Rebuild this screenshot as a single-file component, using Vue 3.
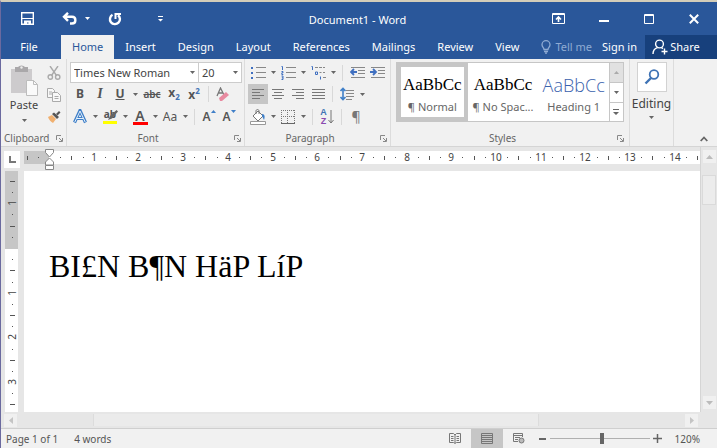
<template>
  <div class="word">
    <header class="title-bar">
      <div class="quick">
        <button class="q-btn save" aria-label="Save">
          <svg width="13" height="13" viewBox="0 0 13 13" fill="none" stroke="currentColor">
            <path d="M.7.7h11.600v11.600H.7z" stroke-width="1.400"/>
            <path d="M1 6.500h11"/>
            <path d="M3 8.500h7v4H7.500v-2H6v2H3z" fill="currentColor" stroke="none"/>
          </svg>
        </button>
        <button class="q-btn undo" aria-label="Undo">
          <svg width="15" height="13" viewBox="0 0 15 13" fill="none" stroke="currentColor" stroke-width="2.400">
            <path d="M6 .8L2 4.800l4 4M2.500 4.800H10c4.500 0 4.500 6.700 0 6.700H8"/>
          </svg>
        </button>
        <svg class="undo-caret" width="5" height="3" viewBox="0 0 5 3"><path d="M0 0h5L2.500 3z" fill="currentColor"/></svg>
        <button class="q-btn redo" aria-label="Repeat">
          <svg width="14" height="14" viewBox="0 0 14 14" fill="none" stroke="currentColor" stroke-width="2.400">
            <path d="M4.500 2.800A5 5 0 1 0 10 3.200"/>
            <path d="M7.500 7V2h5.500" stroke-width="2"/>
          </svg>
        </button>
        <button class="q-btn more" aria-label="Customize">
          <svg width="5" height="6" viewBox="0 0 5 6" fill="currentColor"><path d="M0 0h5v1H0zM0 3h5L2.500 5.500z"/></svg>
        </button>
      </div>
      <h1 class="doc-title">Document1 - Word</h1>
      <div class="window-btns">
        <button aria-label="Ribbon display options">
          <svg width="13" height="11" viewBox="0 0 13 11" fill="none" stroke="currentColor">
            <path d="M.5.5h12v10H.5z"/><path d="M1 1.500h11"/><path d="M6.500 9V4M4 6.500L6.500 4 9 6.500" stroke-width="1.600"/>
          </svg>
        </button>
        <button aria-label="Minimize">
          <svg width="10" height="10" viewBox="0 0 10 10"><path d="M0 6h10v2H0z" fill="currentColor"/></svg>
        </button>
        <button aria-label="Maximize">
          <svg width="10" height="10" viewBox="0 0 10 10" fill="none" stroke="currentColor"><path d="M.5.5h9v9h-9z"/><path d="M0 1.500h10"/></svg>
        </button>
        <button aria-label="Close">
          <svg width="10" height="10" viewBox="0 0 10 10" fill="none" stroke="currentColor" stroke-width="2"><path d="M.8.8l8.400 8.400M9.200.8L.8 9.200"/></svg>
        </button>
      </div>
    </header>

    <nav class="tabs">
      <button class="tab file">File</button>
      <button v-for="t in tabs" :key="t" class="tab" :class="{ active: t === activeTab }" @click="activeTab = t">{{ t }}</button>
      <span class="fill"></span>
      <button class="tell">
        <svg width="10" height="14" viewBox="0 0 10 14" fill="none" stroke="currentColor" stroke-width="1.300">
          <path d="M3 9.500C3 7.500 1 7 1 4.700a4 4 0 0 1 8 0C9 7 7 7.500 7 9.500zM3 11.500h4M4 13.200h2"/>
        </svg>
        Tell me
      </button>
      <button class="sign">Sign in</button>
      <button class="share">
        <svg width="16" height="16" viewBox="0 0 16 16" fill="none" stroke="currentColor" stroke-width="1.400">
          <circle cx="7.500" cy="5" r="3.900"/><path d="M1 15c0-3 2-5.500 4.500-6.300M9.500 8.700l1.500 1"/><path d="M12.500 9.500v6M9.500 12.500h6"/>
        </svg>
        Share
      </button>
    </nav>

    <section class="ribbon">
      <div class="group clipboard">
        <div class="body clip-body">
          <button class="paste">
            <svg width="28" height="31" viewBox="0 0 28 31">
              <path d="M1 4h21v24H1z" fill="#cdcbcd"/>
              <path d="M5 2h3a4 3 0 0 1 7 0h3v5H5z" fill="#aaa8aa"/>
              <circle cx="11.500" cy="2.500" r="1.200" fill="#eee"/>
              <path d="M16.500 15.500h7l4 4v11h-11z" fill="#fafafa" stroke="#bdbdbd"/>
              <path d="M23.500 15.500v4h4" fill="none" stroke="#bdbdbd"/>
            </svg>
            <span>Paste</span>
            <Caret />
          </button>
          <div class="clip-tools">
            <button class="ib" aria-label="Cut">
              <svg width="14" height="14" viewBox="0 0 14 14" fill="none" stroke="#aaa" stroke-width="1.400">
                <path d="M3 0l6.500 9.500M11 0L4.500 9.500"/><circle cx="3.300" cy="11" r="2.200"/><circle cx="10.700" cy="11" r="2.200"/>
              </svg>
            </button>
            <button class="ib" aria-label="Copy">
              <svg width="14" height="14" viewBox="0 0 14 14" fill="#f8f8f8" stroke="#aaa">
                <path d="M.5.5h5l2 2v7h-7z"/><path d="M2 4h3M2 6h3"/><path d="M5.500 4.500h5l3 3v6h-8z"/><path d="M7.500 8.500h4M7.500 10.500h4"/>
              </svg>
            </button>
            <button class="ib" aria-label="Format Painter">
              <svg width="14" height="14" viewBox="0 0 14 14">
                <path d="M1 7l4-2 4 4-3 4c-2-1-4-3-5-6z" fill="#f0b070"/>
                <path d="M5 4l2-1.500 5 4.500-2 2z" fill="#555"/><path d="M9 4l3-3 1.500 1.500-3 3z" fill="#555"/>
              </svg>
            </button>
          </div>
        </div>
        <div class="label"><span>Clipboard</span><Launcher /></div>
      </div>

      <div class="group font">
        <div class="body rows">
          <div class="row combos">
            <label class="combo name">
              <select aria-label="Font"><option>Times New Roman</option></select><Caret />
            </label>
            <label class="combo size">
              <select aria-label="Font size"><option>20</option></select><Caret />
            </label>
          </div>
          <div class="row">
            <button class="ib bold">B</button>
            <button class="ib italic">I</button>
            <button class="ib split under"><u>U</u><Caret /></button>
            <button class="ib strike"><s>abc</s></button>
            <button class="ib bold script"><span>x<sub>2</sub></span></button>
            <button class="ib bold script"><span>x<sup>2</sup></span></button>
            <i class="sep"></i>
            <button class="ib" aria-label="Clear formatting">
              <svg width="14" height="15" viewBox="0 0 14 15">
                <path d="M1 9L4.500 1 8 8M2.500 6h4" fill="none" stroke="#777" stroke-width="1.300"/>
                <path d="M3 11l7-6 3 3-7 6H4z" fill="#e88aa0"/>
              </svg>
            </button>
          </div>
          <div class="row">
            <button class="ib split" aria-label="Text effects">
              <svg width="14" height="15" viewBox="0 0 14 15" fill="none"><path d="M1.500 13.500L7 1.500l5.500 12M4 9.500h6" stroke="#3f7fc8" stroke-width="3.200"/><path d="M1.800 13L7 2l5.200 11M4 9.500h6" stroke="#e4f1fc"/></svg>
              <Caret />
            </button>
            <button class="ib split" aria-label="Highlight">
              <span class="hl">ab<svg width="16" height="16" viewBox="0 0 16 16"><path d="M6 11l2-4 6.500-6L16 2.500l-6 7z" fill="#666"/><path d="M1 12h14v3H1z" fill="#ffff00"/></svg></span>
              <Caret />
            </button>
            <button class="ib split"><span class="color-a">A</span><Caret /></button>
            <button class="ib split"><span class="aa">Aa</span><Caret /></button>
            <i class="sep"></i>
            <button class="ib grow">A<svg width="5" height="3" viewBox="0 0 5 3"><path d="M0 3h5L2.500 0z" fill="#3f7fc8"/></svg></button>
            <button class="ib grow">A<svg width="5" height="3" viewBox="0 0 5 3"><path d="M0 0h5L2.500 3z" fill="#3f7fc8"/></svg></button>
          </div>
        </div>
        <div class="label"><span>Font</span><Launcher /></div>
      </div>

      <div class="group para">
        <div class="body rows">
          <div class="row">
            <button class="ib split" aria-label="Bullets">
              <svg width="15" height="14" viewBox="0 0 15 14"><path d="M0 1h2v2H0zM0 6h2v2H0zM0 11h2v2H0z" fill="#3f6fc0"/><path d="M5 1.500h10M5 6.500h10M5 11.500h10" stroke="#888"/></svg><Caret />
            </button>
            <button class="ib split" aria-label="Numbering">
              <svg width="15" height="14" viewBox="0 0 15 14"><path d="M.5.5h1V4M.5 5.500h1.500v1.300H.8v1.700h1.500M.5 10h1.500v3.500H.5M.8 11.800H2" fill="none" stroke="#3f6fc0"/><path d="M5 1.500h10M5 6.500h10M5 11.500h10" stroke="#888"/></svg><Caret />
            </button>
            <button class="ib split" aria-label="Multilevel list">
              <svg width="15" height="14" viewBox="0 0 15 14" fill="none"><path d="M.5.5h1V4M4.500 6h2v2.500h-2zM9.500 10.500v3" stroke="#3f6fc0"/><path d="M4 1.500h3M8 1.500h3M12 1.500h2M8.500 6.500h2M12 6.500h2M12 11.500h3" stroke="#888"/></svg><Caret />
            </button>
            <i class="sep"></i>
            <button class="ib" aria-label="Decrease indent">
              <svg width="15" height="13" viewBox="0 0 15 13" fill="none"><path d="M1 1.500h14M8 4.500h7M8 7.500h7M1 11.500h14" stroke="#888"/><path d="M7 6H1.500M4 3L1 6l3 3" stroke="#3f6fc0" stroke-width="1.800"/></svg>
            </button>
            <button class="ib" aria-label="Increase indent">
              <svg width="15" height="13" viewBox="0 0 15 13" fill="none"><path d="M1 1.500h14M8 4.500h7M8 7.500h7M1 11.500h14" stroke="#888"/><path d="M0 6h5.500M3 3l3 3-3 3" stroke="#3f6fc0" stroke-width="1.800"/></svg>
            </button>
          </div>
          <div class="row">
            <button v-for="a in aligns" :key="a.name" class="ib" :class="{ on: a.name === align }" :aria-label="a.name" @click="align = a.name">
              <svg width="14" height="11" viewBox="0 0 14 11"><path :d="a.d" stroke="#777"/></svg>
            </button>
            <i class="sep"></i>
            <button class="ib split" aria-label="Line spacing">
              <svg width="14" height="14" viewBox="0 0 14 14" fill="none"><path d="M3 1v12M.5 4L3 1.500 5.500 4M.5 10L3 12.500 5.500 10" stroke="#3f7fc8" stroke-width="1.600"/><path d="M6 3.500h8M6 6.500h8M6 9.500h8M6 12.500h6" stroke="#888"/></svg><Caret />
            </button>
          </div>
          <div class="row">
            <button class="ib split" aria-label="Shading">
              <svg width="16" height="16" viewBox="0 0 16 16"><path d="M3 7l5-5 5 5-5 5z" fill="#fff" stroke="#777"/><path d="M6 5V2c0-2 3-2 3 0v3" fill="none" stroke="#777"/><path d="M12 5c3 0 3 3 2 6l-2-4z" fill="#3f7fc8"/><path d="M.5 12.500h15v3H.5z" fill="#fff" stroke="#999"/></svg><Caret />
            </button>
            <button class="ib split" aria-label="Borders">
              <svg width="14" height="14" viewBox="0 0 14 14" fill="none" stroke="#777"><path d="M.5 0v13M6.500 0v13M13.500 0v13M0 .5h14M0 6.500h14" stroke-dasharray="1 1"/><path d="M0 13.500h14" stroke="#666"/></svg><Caret />
            </button>
            <i class="sep"></i>
            <button class="ib sort" aria-label="Sort">
              <span class="az"><b>A</b><b>Z</b></span>
              <svg width="6" height="14" viewBox="0 0 6 14" fill="none" stroke="#777"><path d="M3 0v13M.5 10L3 13l2.500-3"/></svg>
            </button>
            <i class="sep"></i>
            <button class="ib pilcrow">¶</button>
          </div>
        </div>
        <div class="label"><span>Paragraph</span><Launcher /></div>
      </div>

      <div class="group styles">
        <div class="body">
          <div class="gallery">
            <button v-for="s in styles" :key="s.name" class="style" :class="[s.kind, { picked: s.name === picked }]" @click="picked = s.name">
              <span class="sample">AaBbCc</span>
              <span class="style-name">{{ s.name }}</span>
            </button>
            <div class="gallery-nav">
              <button class="dim" aria-label="Up"><svg width="5" height="3" viewBox="0 0 5 3"><path d="M0 3h5L2.500 0z" fill="#aaa"/></svg></button>
              <button aria-label="Down"><Caret /></button>
              <button aria-label="More styles"><svg width="6" height="6" viewBox="0 0 6 6" fill="#666"><path d="M0 0h6v1H0zM0 3h6L3 6z"/></svg></button>
            </div>
          </div>
        </div>
        <div class="label"><span>Styles</span><Launcher /></div>
      </div>

      <div class="group editing">
        <button class="edit-btn">
          <span class="find">
            <svg width="16" height="16" viewBox="0 0 16 16" fill="none" stroke="#3f73b5"><circle cx="10" cy="5.500" r="4.300" stroke-width="1.800"/><path d="M7 9l-5.500 5.500" stroke-width="2.400"/></svg>
          </span>
          <span>Editing</span>
          <Caret />
        </button>
      </div>
      <div class="collapse">
        <button aria-label="Collapse the ribbon">
          <svg width="8" height="6" viewBox="0 0 8 6" fill="none" stroke="#666" stroke-width="1.800"><path d="M.7 5L4 1.500 7.300 5"/></svg>
        </button>
      </div>
    </section>

    <main class="work">
      <div class="corner">
        <button class="tab-stop" aria-label="Left tab"><svg width="7" height="7" viewBox="0 0 7 7" fill="none" stroke="#777" stroke-width="2"><path d="M1 0v6h6"/></svg></button>
      </div>
      <div ref="hRuler" class="h-ruler">
        <svg class="ruler-svg">
          <rect y="2" width="100%" height="13" fill="#fff"/>
          <rect y="2" width="25" height="13" fill="#c6c6c6"/>
          <template v-for="m in hMarks" :key="m.at">
            <text v-if="m.kind === 'num'" :x="m.at" y="12" text-anchor="middle">{{ m.n }}</text>
            <rect v-else-if="m.kind === 'half'" :x="m.at" y="7" width="1" height="4" fill="#555"/>
            <rect v-else :x="m.at" y="8" width="1" height="1" fill="#555"/>
          </template>
          <path d="M21.500.5h8v3l-4 4.500-4-4.500zM25.500 9l4 4v3h-8v-3zM21.500 16.500h8v4h-8z" fill="#fff" stroke="#888"/>
        </svg>
      </div>
      <div class="v-scroll">
        <button class="scroll-btn" aria-label="Scroll up"><svg width="7" height="4" viewBox="0 0 7 4"><path d="M0 4h7L3.500 0z" fill="#bbb"/></svg></button>
        <div class="v-thumb"></div>
        <button class="scroll-btn" aria-label="Scroll down"><svg width="7" height="4" viewBox="0 0 7 4"><path d="M0 0h7L3.500 4z" fill="#bbb"/></svg></button>
      </div>
      <div ref="vRuler" class="v-ruler">
        <svg class="v-svg">
          <rect width="13" height="100%" fill="#fff"/>
          <rect width="13" height="78" fill="#c6c6c6"/>
          <template v-for="m in vMarks" :key="m.at">
            <text v-if="m.kind === 'num'" :transform="`translate(11 ${m.at}) rotate(-90)`" text-anchor="middle">{{ m.n }}</text>
            <rect v-else-if="m.kind === 'half'" x="5" :y="m.at" width="5" height="1" fill="#555"/>
            <rect v-else x="7" :y="m.at" width="1" height="1" fill="#555"/>
          </template>
        </svg>
      </div>
      <article class="page"><p>BI£N B¶N HäP LíP</p></article>
      <div class="h-scroll">
        <button class="scroll-btn" aria-label="Scroll left"><svg width="4" height="7" viewBox="0 0 4 7"><path d="M4 0v7L0 3.500z" fill="#c4c4c4"/></svg></button>
        <div class="h-track"><div class="h-thumb"></div></div>
        <button class="scroll-btn" aria-label="Scroll right"><svg width="4" height="7" viewBox="0 0 4 7"><path d="M0 0v7l4-3.500z" fill="#c4c4c4"/></svg></button>
      </div>
    </main>

    <footer class="status">
      <span class="pages">Page 1 of 1</span>
      <span>4 words</span>
      <span class="fill"></span>
      <button class="view" aria-label="Read mode">
        <svg width="12" height="11" viewBox="0 0 12 11" fill="none" stroke="#777"><path d="M.5.5h4L6 2l1.500-1.500h4v9h-4L6 10.500 4.500 9.500h-4zM6 2v8M2 3.500h2.500M2 5.500h2.500M2 7.500h2.500M7.500 3.500H10M7.500 5.500H10M7.500 7.500H10"/></svg>
      </button>
      <button class="view on" aria-label="Print layout">
        <svg width="12" height="11" viewBox="0 0 12 11" fill="none" stroke="#777"><path d="M.5.5h11v10H.5zM1 2.500h10M1 4.500h10M1 6.500h10M1 8.500h10"/></svg>
      </button>
      <button class="view" aria-label="Web layout">
        <svg width="12" height="11" viewBox="0 0 12 11" fill="none" stroke="#777"><path d="M5 8.500H.5v-8h9V4M1 2.500h8M2 4.500h5M2 6.500h3"/><circle cx="8.500" cy="7.500" r="2.500" fill="#bbb"/></svg>
      </button>
      <button class="zoom" aria-label="Zoom out"><svg width="7" height="8" viewBox="0 0 7 8"><path d="M0 3h7v2H0z" fill="#666"/></svg></button>
      <input v-model="zoom" class="slider" type="range" min="0" max="100" aria-label="Zoom">
      <button class="zoom" aria-label="Zoom in"><svg width="9" height="9" viewBox="0 0 9 9"><path d="M0 4h9v1H0zM4 0h1v9H4z" fill="#666" stroke="#666" stroke-width=".5"/></svg></button>
      <span class="percent">120%</span>
    </footer>
  </div>
</template>

<script setup>
import { ref, computed, h, onMounted, onBeforeUnmount } from 'vue'

const tabs = ['Home', 'Insert', 'Design', 'Layout', 'References', 'Mailings', 'Review', 'View']
const activeTab = ref('Home')
const align = ref('Left')
const picked = ref('¶ Normal')
const zoom = ref(53)

const aligns = [
  { name: 'Left', d: 'M1 .5h12M1 3.500h8M1 6.500h12M1 9.500h8' },
  { name: 'Center', d: 'M1 .5h12M3 3.500h8M1 6.500h12M3 9.500h8' },
  { name: 'Right', d: 'M1 .5h12M5 3.500h8M1 6.500h12M5 9.500h8' },
  { name: 'Justify', d: 'M1 .5h13M1 3.500h13M1 6.500h13M1 9.500h13' },
]
const styles = [
  { name: '¶ Normal', kind: 'serif' },
  { name: '¶ No Spac...', kind: 'serif' },
  { name: 'Heading 1', kind: 'heading' },
]

// one centimetre on the rulers at 120% zoom
const UNIT = 44.7

const hRuler = ref(null)
const vRuler = ref(null)
const hLength = ref(0)
const vLength = ref(0)

// quarter marks from `from` up to the visible end of the ruler
function marks(origin, from, length) {
  const list = []
  for (let q = from; ; q++) {
    const at = Math.round(origin + (q * UNIT) / 4)
    const rest = Math.abs(q) % 4
    const kind = rest === 0 ? 'num' : rest === 2 ? 'half' : 'dot'
    if (at + (kind === 'num' ? 8 : 1) > length) break
    if (q !== 0) list.push({ at, kind, n: Math.abs(q) / 4 })
  }
  return list
}
const hMarks = computed(() => marks(25, -2, hLength.value))
const vMarks = computed(() => marks(77, -6, vLength.value))

function measure() {
  hLength.value = hRuler.value.clientWidth
  vLength.value = vRuler.value.clientHeight
}
onMounted(() => {
  measure()
  window.addEventListener('resize', measure)
})
onBeforeUnmount(() => window.removeEventListener('resize', measure))

const Caret = () => h('svg', { class: 'caret', width: 5, height: 3, viewBox: '0 0 5 3' }, [
  h('path', { d: 'M0 0h5L2.5 3z', fill: '#666' }),
])
const Launcher = () => h('svg', { width: 7, height: 7, viewBox: '0 0 7 7', fill: 'none', stroke: '#888' }, [
  h('path', { d: 'M.5 5V.5H5M3 3l3 3M6.500 3v3.500H3' }),
])
</script>

<style>
body { margin: 0; }
</style>

<style scoped>
.word {
  box-sizing: border-box;
  min-height: 100vh;
  display: flex;
  flex-direction: column;
  border-top: 2px solid #d3cdb9;
  border-left: 1px solid #6b6a9f;
  background: #f1f1f1;
  font-family: "Noto Sans", "Open Sans", sans-serif;
  font-size: 11px;
  line-height: 14px;
  color: #555;
}
button {
  display: flex;
  align-items: center;
  justify-content: center;
  padding: 0;
  border: 0;
  background: none;
  font: inherit;
  color: inherit;
  white-space: nowrap;
}
svg { display: block; flex-shrink: 0; }
.fill { flex: 1; }

.title-bar {
  display: grid;
  grid-template-columns: 1fr auto 1fr;
  align-items: center;
  height: 33px;
  padding-right: 1px;
  background: #2a579a;
  color: #fff;
}
.quick { display: flex; align-items: center; padding-left: 20px; }
.q-btn.undo { margin-left: 28px; }
.undo-caret { margin-left: 8px; }
.q-btn.redo { margin-left: 18px; }
.q-btn.more { margin-left: 36px; }
.doc-title { margin: 0; padding: 3px 2px 0 0; font-size: 11px; font-weight: 400; }
.window-btns { display: flex; justify-content: flex-end; }
.window-btns button { width: 45px; height: 30px; }

.tabs {
  display: flex;
  height: 24px;
  background: #2a579a;
  color: #fff;
}
.tab { padding: 0 11px; }
.tab.file { width: 60px; padding: 0 4px 0 0; }
.tab.active { background: #f1f1f1; color: #2a579a; }
.tell { gap: 4px; color: #8fabd3; }
.sign { padding: 0 8px 0 10px; }
.share { width: 72px; gap: 2px; padding-right: 10px; background: #17407c; }

.ribbon {
  display: flex;
  height: 87px;
  border-bottom: 1px solid #d5d5d5;
}
.group {
  box-sizing: border-box;
  display: flex;
  flex-direction: column;
  padding: 3px 3px 0;
  border-right: 1px solid #dcdcdc;
}
.body { height: 69px; }
.label { display: flex; align-items: center; height: 14px; font-size: 10px; color: #666; }
.label span { flex: 1; padding-right: 8px; text-align: center; }
.clipboard { width: 66px; padding-right: 1px; }
.clipboard .label { padding-right: 2px; }
.clipboard .label span { padding: 0; text-align: left; }
.clip-body { display: flex; }
.paste { flex-direction: column; justify-content: flex-start; width: 40px; padding-top: 3px; gap: 2px; color: #444; }
.paste .caret { margin-top: 5px; }
.clip-tools { display: grid; grid-template-rows: repeat(3, 22px); padding-top: 1px; }
.font { width: 178px; }
.para { width: 146px; }
.styles { width: 239px; padding-left: 5px; padding-right: 5px; }
.editing { width: 44px; color: #444; }

.rows { display: grid; grid-template-rows: 21px 22px 23px; align-content: start; }
.row { display: flex; align-items: center; }
.ib { width: 20px; height: 20px; }
.split { width: 30px; display: grid; grid-template-columns: 20px 10px; place-items: center; }
.ib.on { background: #c6c6c6; }
.sep { width: 1px; height: 16px; margin: 0 4px; background: #d8d8d8; }
.bold { font-weight: 700; font-size: 12px; }
.italic { font: italic 700 14px "Liberation Serif", serif; }
.under u { font-weight: 700; font-size: 12px; }
.strike { width: 24px; font-size: 10px; font-weight: 600; }
.script sub, .script sup { font-size: 8px; line-height: 8px; color: #3f73b5; }
.hl { position: relative; display: grid; grid-template: 16px / 16px; font-size: 10px; font-weight: 700; line-height: 10px; }
.hl svg { position: absolute; left: 0; top: 0; }
.color-a { width: 15px; border-bottom: 3px solid #f00; font-size: 14px; font-weight: 600; line-height: 13px; text-align: center; }
.aa { font-size: 12px; }
.grow { align-items: flex-start; font-size: 12px; font-weight: 600; line-height: 20px; }
.grow svg { margin-top: 3px; }
.sort { gap: 1px; }
.az { display: grid; font: 9px/9px "Liberation Sans", sans-serif; color: #3f73b5; }
.az b + b { color: #8a4ab0; }
.pilcrow { font-size: 14px; color: #777; }

.combo {
  box-sizing: border-box;
  display: grid;
  grid-template-columns: 1fr 12px;
  align-items: center;
  height: 21px;
  border: 1px solid #ccc;
  background: #fff;
}
.combo select {
  width: 100%;
  min-width: 0;
  padding: 0 0 0 3px;
  border: 0;
  background: none;
  appearance: none;
  font: inherit;
  color: #444;
}
.combo .caret { justify-self: center; }
.combo.name { width: 129px; }
.combo.size { width: 43px; border-left: 0; }

.gallery {
  box-sizing: border-box;
  display: grid;
  grid-template-columns: repeat(3, 1fr) 14px;
  height: 60px;
  border: 1px solid #c6c6c6;
  background: #fff;
}
.style {
  box-sizing: border-box;
  flex-direction: column;
  gap: 5px;
  padding-top: 4px;
  min-width: 0;
  border: 4px solid transparent;
  overflow: hidden;
}
.style.picked { border-color: #c6c6c6; }
.style-name { color: #666; }
.sample { font: 17px/20px "Liberation Serif", serif; color: #000; }
.heading .sample { font: 300 18px/20px "Open Sans", "Noto Sans", sans-serif; color: #3a62ad; }
.gallery-nav { display: grid; grid-template-rows: repeat(3, 1fr); border-left: 1px solid #c6c6c6; }
.gallery-nav button + button { border-top: 1px solid #c6c6c6; }
.gallery-nav .dim { background: #e1e1e1; }

.edit-btn { flex-direction: column; font-size: 12px; gap: 5px; }
.find { display: grid; place-items: center; width: 28px; height: 28px; border: 1px solid #d2d2d2; background: #fff; }
.collapse { flex: 1; display: flex; justify-content: flex-end; align-items: flex-end; padding: 0 9px 4px; }

.work {
  flex: 1;
  display: grid;
  grid-template: 24px 1fr 16px / 23px 1fr 17px;
  background: #e6e6e6;
}
.corner { padding: 4px 0 0 3px; }
.tab-stop { width: 16px; height: 17px; background: #fff; }
.h-ruler { padding-top: 2px; min-width: 0; }
.ruler-svg { width: 100%; height: 22px; overflow: hidden; }
.ruler-svg text, .v-svg text { font-size: 10px; fill: #444; }
.v-scroll {
  grid-column: 3;
  grid-row: 1 / 3;
  display: flex;
  flex-direction: column;
  align-items: center;
  padding: 3px 0;
  border-left: 1px solid #d5d5d5;
}
.scroll-btn { width: 13px; height: 13px; background: #f0f0f0; }
.v-thumb { flex: 0 0 28px; width: 12px; margin: 12px 0 auto; border: 1px solid #dadada; background: #ececec; }
.v-ruler { position: relative; }
.v-svg { position: absolute; left: 4px; top: 0; width: 13px; height: 100%; overflow: hidden; }
.page { padding: 76px 25px 20px; background: #fff; }
.page p { margin: 0; font: 32px/38px "Liberation Serif", "Times New Roman", serif; color: #000; }
.h-scroll { grid-column: 1 / 3; display: flex; align-items: center; padding: 0 2px 0 3px; }
.h-track { flex: 1; padding-left: 11%; }
.h-thumb { width: 75%; height: 12px; background: #ebebeb; border-left: 1px solid #dcdcdc; border-right: 1px solid #dcdcdc; }

.status {
  display: flex;
  align-items: center;
  height: 19px;
  padding: 0 17px 0 5px;
  border-top: 1px solid #cfcfcf;
  font-size: 10px;
}
.pages { margin-right: 16px; }
.view { width: 32px; height: 19px; }
.view.on { background: #c6c6c6; }
.zoom { width: 15px; height: 15px; }
.slider { width: 100px; height: 12px; margin: 0; appearance: none; background: none; }
.slider::-webkit-slider-runnable-track { height: 1px; background: #b0b0b0; }
.slider::-webkit-slider-thumb { appearance: none; width: 4px; height: 11px; margin-top: -5px; background: #666; }
.percent { margin-left: 10px; }
</style>
